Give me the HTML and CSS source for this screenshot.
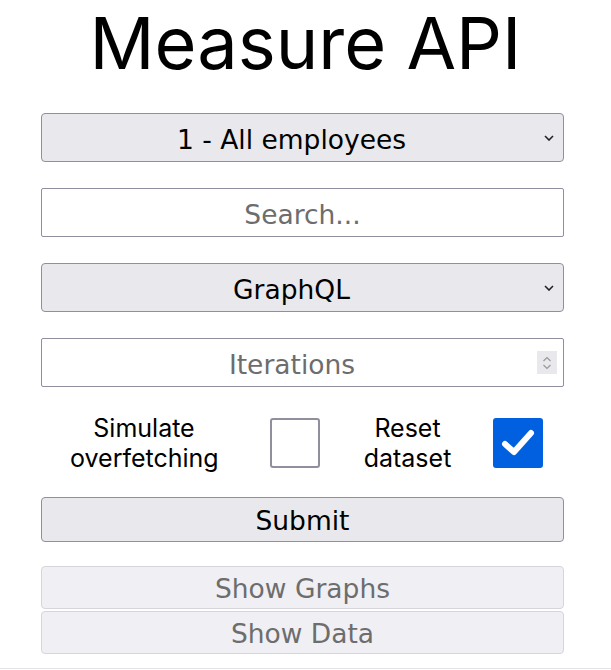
FILE: index.html
```html
<!DOCTYPE html>
<html>
<head>
<meta charset="utf-8">
<link rel="stylesheet" href="styles.css">
</head>
<body>
<main class="app">
  <h1 class="title">Measure API</h1>
  <div class="field field-select">
    <select class="control">
      <option>1 - All employees</option>
    </select>
    <svg class="chevron" width="10" height="6" viewBox="0 0 10 6"><path d="M1 1 L5 5 L9 1" fill="none" stroke="#222" stroke-width="1.6"/></svg>
  </div>
  <div class="field field-input">
    <input class="control" type="text" placeholder="Search...">
  </div>
  <div class="field field-select">
    <select class="control">
      <option>GraphQL</option>
    </select>
    <svg class="chevron" width="10" height="6" viewBox="0 0 10 6"><path d="M1 1 L5 5 L9 1" fill="none" stroke="#222" stroke-width="1.6"/></svg>
  </div>
  <div class="field field-input field-number">
    <input class="control" type="text" placeholder="Iterations">
    <span class="spin">
      <svg width="10" height="16" viewBox="0 0 10 16"><path d="M1.5 6 L5 2.5 L8.5 6" fill="none" stroke="#999" stroke-width="1.2"/><path d="M1.5 10 L5 13.5 L8.5 10" fill="none" stroke="#999" stroke-width="1.2"/></svg>
    </span>
  </div>
  <div class="checks">
    <span class="check-label label-sim">Simulate<br>overfetching</span>
    <span class="box"></span>
    <span class="check-label label-reset">Reset<br>dataset</span>
    <span class="box box-on">
      <svg width="36" height="30" viewBox="0 0 36 30"><path d="M5 16 L14 24 L31 5" fill="none" stroke="#fff" stroke-width="6" stroke-linecap="round" stroke-linejoin="round"/></svg>
    </span>
  </div>
  <button class="btn btn-submit">Submit</button>
  <button class="btn btn-off btn-graphs" disabled>Show Graphs</button>
  <button class="btn btn-off btn-data" disabled>Show Data</button>
  <div class="bottom-line"></div>
</main>
</body>
</html>
```
FILE: styles.css
```css
html, body {
  margin: 0;
  padding: 0;
  background: #fff;
}
.app {
  width: 523px;
  padding: 0 0 0 41px;
  display: flex;
  flex-direction: column;
}
.title {
  margin: 0 0 27px -41px;
  width: 611px;
  text-align: center;
  font-family: Inter, "Noto Sans", sans-serif;
  font-weight: 400;
  font-size: 72px;
  line-height: 86px;
  color: #000;
}
.field {
  box-sizing: border-box;
  height: 49px;
  margin-bottom: 26px;
  border: 1px solid #8f8f9d;
  display: flex;
  align-items: center;
}
.field-select {
  background: #e9e9ed;
  border-radius: 4px;
  padding-right: 9px;
}
.field-select .control {
  margin-right: 3px;
}
.field-input {
  background: #fff;
  border-radius: 2px;
}
.field-number {
  padding-right: 6px;
}
.field-number .control {
  padding-left: 5px;
}
.control {
  appearance: none;
  -webkit-appearance: none;
  box-sizing: border-box;
  flex: 1;
  min-width: 0;
  height: 100%;
  border: none;
  outline: none;
  background: transparent;
  font-family: "DejaVu Sans", Verdana, sans-serif;
  font-size: 26.5px;
  color: #000;
  text-align: center;
  text-align-last: center;
  padding: 3px 0 0 0;
  margin: 0;
}
.control::placeholder {
  color: #6d6d6d;
  opacity: 1;
}
.chevron {
  display: block;
}
.spin {
  width: 20px;
  height: 23px;
  background: #e9e9ed;
  display: flex;
  align-items: center;
  justify-content: center;
}
.checks {
  display: flex;
  align-items: center;
  height: 60px;
  margin-bottom: 24px;
}
.check-label {
  font-family: Inter, "Noto Sans", sans-serif;
  font-size: 25px;
  line-height: 30px;
  text-align: center;
  color: #000;
}
.label-sim {
  margin-left: 29px;
  width: 148px;
}
.box {
  box-sizing: border-box;
  width: 50px;
  height: 50px;
  border: 2px solid #8f8f9d;
  border-radius: 3px;
  background: #fff;
  display: flex;
  align-items: center;
  justify-content: center;
}
.label-sim + .box {
  margin-left: 52px;
}
.label-reset {
  margin-left: 43px;
  width: 89px;
}
.label-reset + .box {
  margin-left: 41px;
}
.box-on {
  background: #0060df;
  border-color: #0060df;
}
.btn {
  box-sizing: border-box;
  width: 523px;
  margin: 0;
  padding: 1px 0 0 0;
  border-radius: 4px;
  font-family: "DejaVu Sans", Verdana, sans-serif;
  font-size: 26.5px;
  text-align: center;
}
.btn-submit {
  height: 45px;
  background: #e9e9ed;
  border: 1px solid #8f8f9d;
  color: #000;
  margin-bottom: 24px;
}
.btn-off {
  height: 43px;
  background: #f0f0f4;
  border: 1px solid #d5d5dc;
  color: #6d6d6d;
}
.btn-graphs {
  margin-bottom: 2px;
}
.bottom-line {
  margin: 14px 0 0 -41px;
  width: 611px;
  height: 1px;
  background: #e4e4e8;
}
```
